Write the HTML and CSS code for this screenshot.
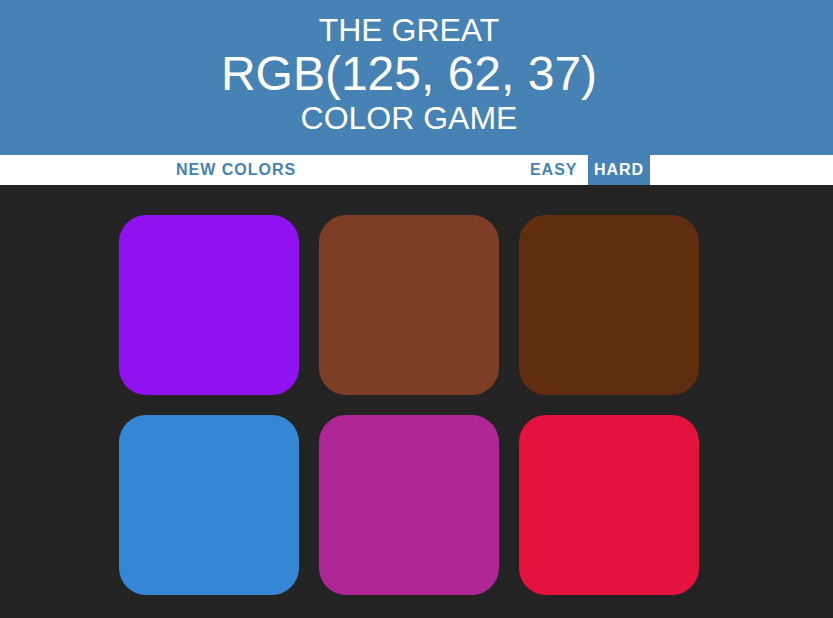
FILE: index.html
```html
<!DOCTYPE html>
<html lang="en">
<head>
<meta charset="utf-8">
<title>Color Game</title>
<link rel="stylesheet" href="styles.css">
</head>
<body>
<h1 class="title">The Great<br><span class="color-display">RGB(125, 62, 37)</span><br>Color Game</h1>
<div class="stripe">
  <button class="btn">New Colors</button>
  <span class="message"></span>
  <button class="btn">Easy</button>
  <button class="btn selected">Hard</button>
</div>
<main class="board">
  <div class="grid">
    <div class="square sq-purple"></div>
    <div class="square sq-brown"></div>
    <div class="square sq-dark"></div>
    <div class="square sq-blue"></div>
    <div class="square sq-magenta"></div>
    <div class="square sq-red"></div>
  </div>
</main>
</body>
</html>
```
FILE: styles.css
```css
html, body {
  margin: 0;
  padding: 0;
}
body {
  background: #232323;
  font-family: "Liberation Sans", Arial, sans-serif;
  font-size: 16px;
  overflow: hidden;
}
.title {
  margin: 0;
  padding: 13px 15px 19px 0;
  background: #4682b4;
  color: #fff;
  text-align: center;
  text-transform: uppercase;
  font-weight: normal;
  font-size: 32px;
  line-height: 1.1;
}
.color-display {
  font-size: 48px;
}
.stripe {
  height: 30px;
  background: #fff;
  display: flex;
  justify-content: center;
  align-items: stretch;
  gap: 4.4px;
  padding-right: 13px;
}
.btn {
  border: none;
  background: none;
  margin: 0;
  padding: 0 6px;
  font-family: "Liberation Sans", Arial, sans-serif;
  font-size: 16px;
  font-weight: 700;
  letter-spacing: 1px;
  text-transform: uppercase;
  color: #4682b4;
  height: 100%;
}
.selected {
  background: #4682b4;
  color: #fff;
}
.message {
  width: 213px;
}
.board {
  padding-right: 15px;
}
.grid {
  width: 580px;
  margin: 20px auto 0;
  padding: 10px;
  display: grid;
  grid-template-columns: repeat(3, 180px);
  gap: 20px;
}
.square {
  height: 180px;
  border-radius: 27px;
}
.sq-purple { background: #9112f0; }
.sq-brown { background: #7d3e25; }
.sq-dark { background: #612d0f; }
.sq-blue { background: #3587d6; }
.sq-magenta { background: #af2795; }
.sq-red { background: #e5123e; }
```
